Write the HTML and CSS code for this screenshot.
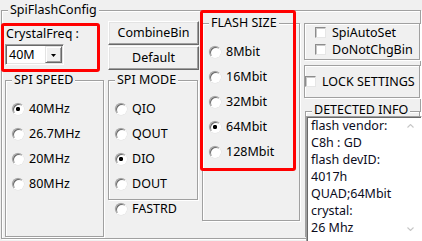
FILE: index.html
```html
<!DOCTYPE html>
<html>
<head>
<meta charset="utf-8">
<link rel="stylesheet" href="styles.css">
</head>
<body>
<div class="group outer">
  <div class="legend">SpiFlashConfig</div>
  <div class="cols">
    <div class="col col-a">
      <div class="crystal-label">CrystalFreq :</div>
      <div class="combo">
        <span class="combo-val">40M</span>
        <span class="combo-btn"><svg width="5" height="3" viewBox="0 0 5 3"><polygon points="0,0 5,0 2.5,3" fill="#000"/></svg></span>
      </div>
      <div class="group speed">
        <div class="legend">SPI SPEED</div>
        <div class="radios">
          <div class="radio-row"><span class="radio checked"></span>40MHz</div>
          <div class="radio-row"><span class="radio"></span>26.7MHz</div>
          <div class="radio-row"><span class="radio"></span>20MHz</div>
          <div class="radio-row"><span class="radio"></span>80MHz</div>
        </div>
      </div>
    </div>
    <div class="col col-b">
      <div class="btn btn-first">CombineBin</div>
      <div class="btn btn-second">Default</div>
      <div class="group mode">
        <div class="legend">SPI MODE</div>
        <div class="radios">
          <div class="radio-row"><span class="radio"></span>QIO</div>
          <div class="radio-row"><span class="radio"></span>QOUT</div>
          <div class="radio-row"><span class="radio checked"></span>DIO</div>
          <div class="radio-row"><span class="radio"></span>DOUT</div>
        </div>
      </div>
      <div class="radio-row fastrd"><span class="radio"></span>FASTRD</div>
    </div>
    <div class="col col-c">
      <div class="group flash">
        <div class="legend">FLASH SIZE</div>
        <div class="radios">
          <div class="radio-row"><span class="radio"></span>8Mbit</div>
          <div class="radio-row"><span class="radio"></span>16Mbit</div>
          <div class="radio-row"><span class="radio"></span>32Mbit</div>
          <div class="radio-row"><span class="radio checked"></span>64Mbit</div>
          <div class="radio-row"><span class="radio"></span>128Mbit</div>
        </div>
      </div>
    </div>
    <div class="col col-d">
      <div class="group chk-group">
        <div class="chk-row"><span class="chk"></span>SpiAutoSet</div>
        <div class="chk-row"><span class="chk"></span>DoNotChgBin</div>
      </div>
      <div class="group lock-group">
        <div class="chk-row lock-row"><span class="chk"></span>LOCK SETTINGS</div>
      </div>
      <div class="group info">
        <div class="legend info-legend">DETECTED INFO</div>
        <div class="textarea">
          <div class="ta-text">
            <div>flash vendor:</div>
            <div>C8h : GD</div>
            <div>flash devID:</div>
            <div>4017h</div>
            <div>QUAD;64Mbit</div>
            <div>crystal:</div>
            <div>26 Mhz</div>
          </div>
          <div class="ta-scroll">
            <span class="arrow"><svg width="7" height="4" viewBox="0 0 7 4"><polyline points="0.5,3.5 3.5,0.5 6.5,3.5" fill="none" stroke="#c6c6c6" stroke-width="1.1"/></svg></span>
            <span class="arrow"><svg width="7" height="4" viewBox="0 0 7 4"><polyline points="0.5,0.5 3.5,3.5 6.5,0.5" fill="none" stroke="#c6c6c6" stroke-width="1.1"/></svg></span>
          </div>
        </div>
      </div>
    </div>
  </div>
</div>
<div class="highlight hl-crystal"></div>
<div class="highlight hl-flash"></div>
</body>
</html>
```

FILE: styles.css
```css
* { box-sizing: border-box; }

body {
  margin: 0;
  width: 422px;
  height: 241px;
  overflow: hidden;
  position: relative;
  background: #f0f0f0;
  font-family: "Noto Sans", "DejaVu Sans", sans-serif;
  font-size: 12.5px;
  color: #000;
}

.group {
  border: 1px solid #a0a0a0;
  box-shadow: inset 1px 1px 0 #fff, 1px 1px 0 #fff;
}

.legend {
  width: max-content;
  margin: -9px 0 -7px 6px;
  padding: 0 2px;
  line-height: 16px;
  background: #f0f0f0;
  white-space: nowrap;
}

.info-legend {
  line-height: 12px;
  margin: -8px 0 -4px 6px;
}

.outer {
  margin: 10px 0 0 1px;
  width: 420px;
  height: 229px;
}

.cols {
  display: flex;
  height: 227px;
}

.col { display: flex; flex-direction: column; }
.col-a { margin-left: 3px; width: 99px; }
.col-b { margin-left: 4px; width: 91px; }
.col-c { margin-left: 3px; width: 98px; }
.col-d { margin-left: 4px; width: 116px; }

.crystal-label {
  margin-top: 15px;
  padding-left: 1px;
  line-height: 16px;
}

.combo {
  margin-top: 2px;
  width: 59px;
  height: 21px;
  display: flex;
  align-items: center;
  background: #fff;
  border: 1px solid;
  border-color: #a0a0a0 #fff #fff #a0a0a0;
  box-shadow: inset 1px 1px 0 #696969, inset -1px -1px 0 #e3e3e3;
  padding: 1px 1px 1px 3px;
}
.combo-val { flex: 1; line-height: 16px; }
.combo-btn {
  width: 17px;
  height: 17px;
  display: flex;
  align-items: center;
  justify-content: center;
  background: #f0f0f0;
  border: 1px solid;
  border-color: #e3e3e3 #696969 #696969 #e3e3e3;
  box-shadow: inset 1px 1px 0 #fff, inset -1px -1px 0 #a0a0a0;
  padding-top: 1px;
}
.combo-btn svg { display: block; }

.speed { margin-top: 15px; height: 157px; }

.radios { padding: 15px 0 0 6px; }
.radio-row {
  height: 25px;
  display: flex;
  align-items: center;
  line-height: 16px;
  white-space: nowrap;
}
.radio {
  width: 12px;
  height: 12px;
  border-radius: 50%;
  margin-right: 5px;
  flex: none;
  background: #fff;
  border: 1px solid;
  border-color: #a0a0a0 #fff #fff #a0a0a0;
  box-shadow: inset 1px 1px 0 #696969, 0 0 0 0.3px #d8d8d8;
}
.radio.checked {
  background: radial-gradient(circle at 50% 50%, #000 0 1.9px, #fff 2.4px);
}

.btn {
  height: 24px;
  display: flex;
  align-items: center;
  justify-content: center;
  line-height: 16px;
  border: 1px solid;
  border-color: #fff #696969 #696969 #fff;
  box-shadow: inset -1px -1px 0 #a0a0a0, inset 1px 1px 0 #e3e3e3;
}
.btn-first { margin-top: 10px; }
.btn-second { margin-top: 1px; }

.mode { margin-top: 10px; width: 90px; height: 120px; }
.fastrd { margin-top: -4px; padding-left: 7px; }

.flash { margin-top: 12px; height: 198px; }

.chk-group { margin-top: 12px; height: 37px; padding-left: 10px; }
.chk-row {
  height: 17px;
  display: flex;
  align-items: center;
  line-height: 16px;
  white-space: nowrap;
}
.chk {
  width: 11px;
  height: 11px;
  margin-right: 6px;
  flex: none;
  background: #fff;
  border: 1px solid;
  border-color: #8c8c8c #e6e6e6 #e6e6e6 #8c8c8c;
  box-shadow: inset 1px 1px 0 #c8c8c8;
}

.lock-group { margin-top: 5px; height: 33px; }
.lock-row { height: 31px; }

.info {
  margin-top: 13px;
  margin-left: 1px;
  width: 115px;
  height: 126px;
}

.textarea {
  margin-top: 4px;
  width: 116px;
  height: 126px;
  display: flex;
  background: #fff;
  border: 1px solid;
  border-color: #a0a0a0 #fff #fff #a0a0a0;
  box-shadow: inset 1px 1px 0 #696969;
  padding: 1px 0 0 1px;
}
.ta-text {
  flex: 1;
  margin-top: -1px;
  padding-left: 3px;
  line-height: 17px;
  white-space: nowrap;
  color: #0c0c1c;
}
.ta-scroll {
  width: 17px;
  height: 120px;
  margin-top: -1px;
  margin-right: 2px;
  display: flex;
  flex-direction: column;
  justify-content: space-between;
}
.arrow {
  width: 17px;
  height: 17px;
  display: flex;
  align-items: center;
  justify-content: center;
}
.arrow svg { display: block; }

.highlight {
  position: absolute;
  border: 3px solid #ff0000;
  border-radius: 3px;
  pointer-events: none;
}
.hl-crystal { left: 1px; top: 23px; width: 99px; height: 49px; }
.hl-flash { left: 200px; top: 10px; width: 96px; height: 161px; }
```
